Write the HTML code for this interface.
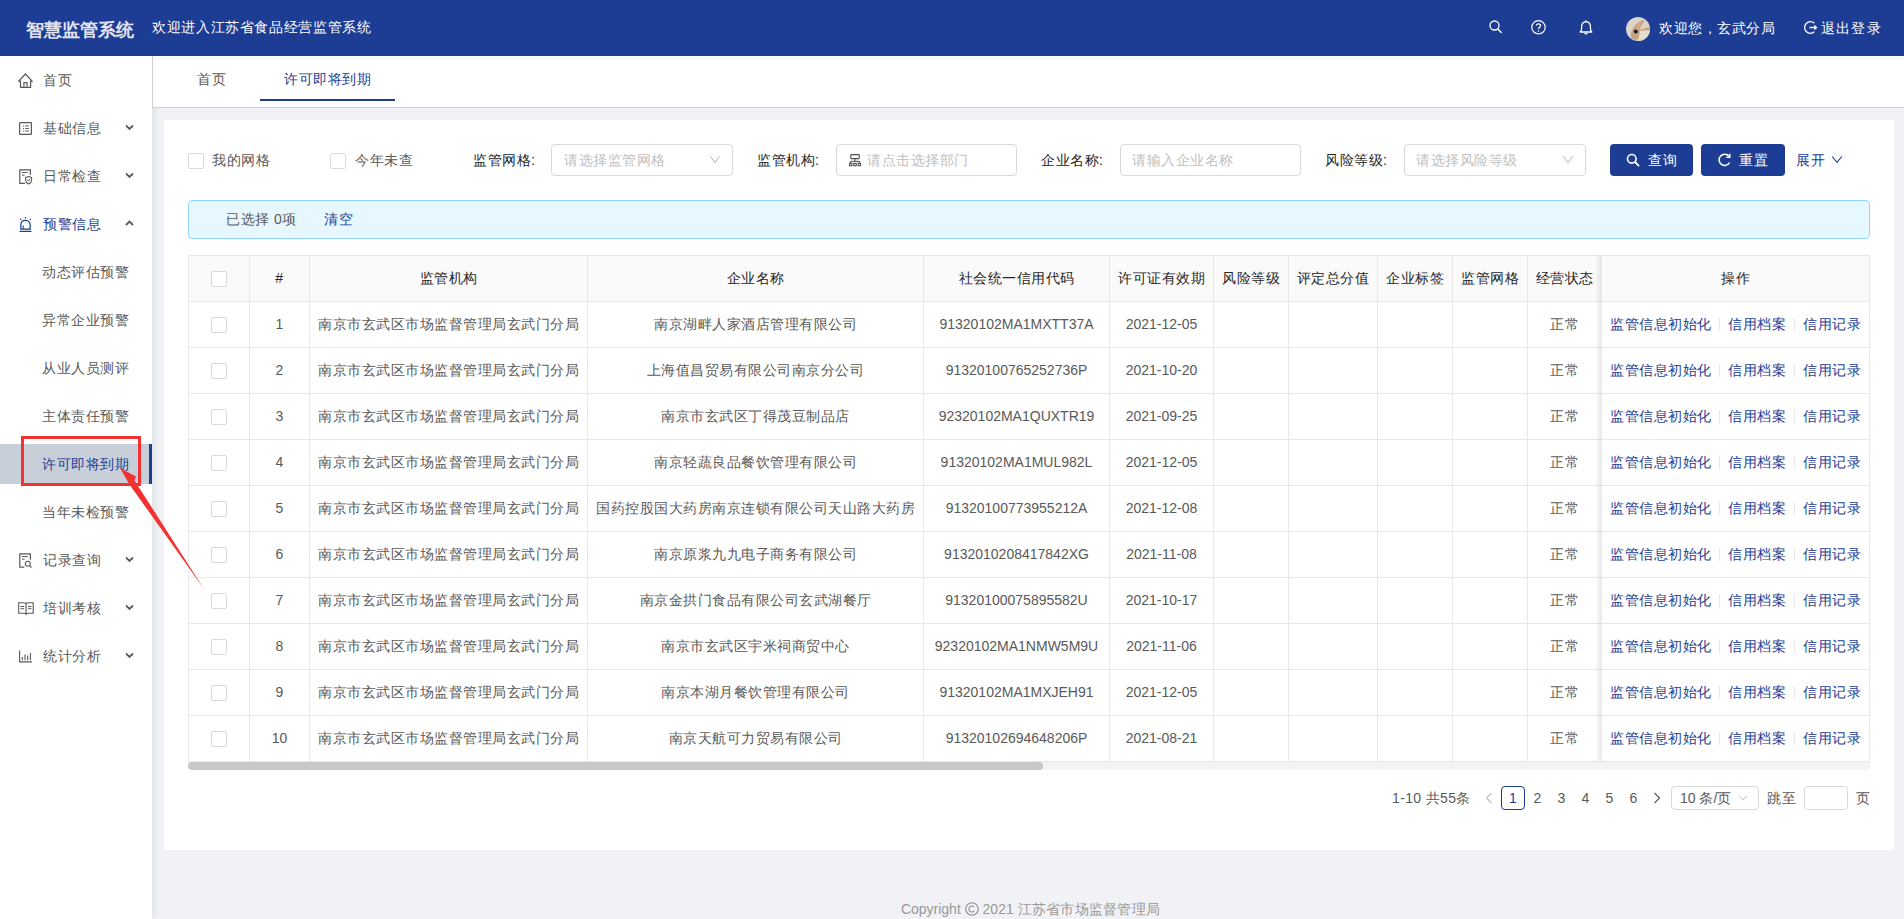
<!DOCTYPE html><html><head><meta charset="utf-8"><style>
*{box-sizing:border-box;margin:0;padding:0}
html,body{width:1904px;height:919px;overflow:hidden;background:#f0f2f5;font-family:"Liberation Sans",sans-serif;font-size:14px;color:#595959;position:relative}
.a{position:absolute;white-space:nowrap;line-height:20px}
.cj{letter-spacing:.5px}
#hdr{position:absolute;left:0;top:0;width:1904px;height:56px;background:#1d3d94}
#side{position:absolute;left:0;top:56px;width:152px;height:863px;background:#fff;box-shadow:2px 0 8px rgba(0,21,41,.08)}
#tabs{position:absolute;left:152px;top:56px;width:1752px;height:52px;background:#fff;border-left:1px solid #cfcfcf;border-bottom:1px solid #cfcfcf;}
#card{position:absolute;left:164px;top:120px;width:1730px;height:730px;background:#fff;border-radius:2px}
.cb{position:absolute;width:16px;height:16px;border:1px solid #d9d9d9;border-radius:2px;background:#fff}
.inp{position:absolute;height:32px;border:1px solid #d9d9d9;border-radius:4px;background:#fff}
.ph{color:#bfbfbf}
.lbl{color:#262626}
.btn{position:absolute;height:32px;top:144px;background:#1d3d94;border-radius:4px;color:#fff}
.hl{position:absolute;background:#e8e8e8}
.th{color:#262626}
.lnk{color:#1d3d94}
</style></head><body><div id="hdr">
<div class="a" style="left:26px;top:20px;font-size:18px;font-weight:bold;color:#e1e4ef">智慧监管系统</div>
<div class="a" style="left:152px;top:17px;color:#fff;letter-spacing:.64px">欢迎进入江苏省食品经营监管系统</div>
<svg style="position:absolute;left:1488px;top:20px" width="16" height="16" viewBox="0 0 16 16"><circle cx="6.5" cy="5.5" r="4.5" fill="none" stroke="#fff" stroke-width="1.3"/><path d="M9.7 8.9 L13.3 12.5" stroke="#fff" stroke-width="1.4" stroke-linecap="round"/></svg>
<svg style="position:absolute;left:1530px;top:20px" width="17" height="15" viewBox="0 0 17 15"><circle cx="8.5" cy="7.3" r="6.7" fill="none" stroke="#fff" stroke-width="1.2"/><path d="M6.4 5.6 C6.4 3.3 10.6 3.3 10.6 5.6 C10.6 7.2 8.5 7.2 8.5 9" fill="none" stroke="#fff" stroke-width="1.2"/><circle cx="8.5" cy="11" r=".8" fill="#fff"/></svg>
<svg style="position:absolute;left:1578px;top:19px" width="16" height="17" viewBox="0 0 16 17"><path d="M2.2 13 C3.3 12 3.6 11 3.6 9.5 V7.3 C3.6 4.6 5.5 2.8 8 2.8 C10.5 2.8 12.4 4.6 12.4 7.3 V9.5 C12.4 11 12.7 12 13.8 13 Z" fill="none" stroke="#fff" stroke-width="1.3" stroke-linejoin="round"/><path d="M8 1.2 V2.8" stroke="#fff" stroke-width="1.3"/><path d="M6.7 14 C7 15.3 9 15.3 9.3 14" stroke="#fff" stroke-width="1.2" fill="none"/></svg>
<svg style="position:absolute;left:1626px;top:17px" width="24" height="24" viewBox="0 0 24 24"><defs><clipPath id="avc"><circle cx="12" cy="12" r="12"/></clipPath></defs><g clip-path="url(#avc)"><rect width="24" height="24" fill="#d9d5cb"/><path d="M5 20 C4 14 8 8 14 4 L19 3 C16 8 14 10 14 13 C18 11 22 10 25 11 L25 14 C20 13 16 15 14 20 C12 24 7 24 5 20 Z" fill="#c49a74" opacity=".85"/><path d="M15 4 C13 8 12 11 12.5 14" stroke="#d8a890" stroke-width="2" fill="none"/><path d="M14 14 C18 13 22 13 25 14 L25 25 L12 25 Z" fill="#e2dfcf"/><circle cx="9.8" cy="14.5" r="2" fill="#1a1a1a"/></g></svg>
<div class="a cj" style="left:1659px;top:18px;color:#fff">欢迎您，玄武分局</div>
<svg style="position:absolute;left:1803px;top:20px" width="15" height="15" viewBox="0 0 15 15"><path d="M11.3 3.2 A5.8 5.8 0 1 0 11.3 11.8" fill="none" stroke="#fff" stroke-width="1.3"/><path d="M6.5 7.5 H13.5 M11.3 5.5 L13.5 7.5 L11.3 9.5" fill="none" stroke="#fff" stroke-width="1.3"/></svg>
<div class="a" style="left:1821px;top:18px;color:#fff;letter-spacing:1.2px">退出登录</div>
</div>
<div id="side">
<div style="position:absolute;left:0;top:388px;width:152px;height:40px;background:#c8cfd8"></div>
<div style="position:absolute;left:149px;top:388px;width:3px;height:40px;background:#1d3d94"></div>
</div>
<div class="a cj" style="left:43px;top:70px;color:#595959">首页</div>
<div class="a cj" style="left:43px;top:118px;color:#595959">基础信息</div>
<svg style="position:absolute;left:125px;top:124px" width="9" height="7" viewBox="0 0 9 7"><path d="M1 1.5 L4.5 5 L8 1.5" fill="none" stroke="#595959" stroke-width="1.8"/></svg>
<div class="a cj" style="left:43px;top:166px;color:#595959">日常检查</div>
<svg style="position:absolute;left:125px;top:172px" width="9" height="7" viewBox="0 0 9 7"><path d="M1 1.5 L4.5 5 L8 1.5" fill="none" stroke="#595959" stroke-width="1.8"/></svg>
<div class="a cj" style="left:43px;top:214px;color:#1d3d94">预警信息</div>
<svg style="position:absolute;left:125px;top:220px" width="9" height="7" viewBox="0 0 9 7"><path d="M1 5 L4.5 1.5 L8 5" fill="none" stroke="#595959" stroke-width="1.8"/></svg>
<div class="a cj" style="left:42px;top:262px;color:#595959">动态评估预警</div>
<div class="a cj" style="left:42px;top:310px;color:#595959">异常企业预警</div>
<div class="a cj" style="left:42px;top:358px;color:#595959">从业人员测评</div>
<div class="a cj" style="left:42px;top:406px;color:#595959">主体责任预警</div>
<div class="a cj" style="left:42px;top:454px;color:#1d3d94">许可即将到期</div>
<div class="a cj" style="left:42px;top:502px;color:#595959">当年未检预警</div>
<div class="a cj" style="left:43px;top:550px;color:#595959">记录查询</div>
<svg style="position:absolute;left:125px;top:556px" width="9" height="7" viewBox="0 0 9 7"><path d="M1 1.5 L4.5 5 L8 1.5" fill="none" stroke="#595959" stroke-width="1.8"/></svg>
<div class="a cj" style="left:43px;top:598px;color:#595959">培训考核</div>
<svg style="position:absolute;left:125px;top:604px" width="9" height="7" viewBox="0 0 9 7"><path d="M1 1.5 L4.5 5 L8 1.5" fill="none" stroke="#595959" stroke-width="1.8"/></svg>
<div class="a cj" style="left:43px;top:646px;color:#595959">统计分析</div>
<svg style="position:absolute;left:125px;top:652px" width="9" height="7" viewBox="0 0 9 7"><path d="M1 1.5 L4.5 5 L8 1.5" fill="none" stroke="#595959" stroke-width="1.8"/></svg>
<svg style="position:absolute;left:18px;top:73px" width="15" height="15" viewBox="0 0 15 15"><path d="M.7 8.2 L7.4 1 L14.1 8.2 H12.6 V14.4 H2.5 V8.2 Z" fill="none" stroke="#595959" stroke-width="1.2" stroke-linejoin="miter"/><path d="M5.9 14.4 V9.6 H9 V14.4" fill="none" stroke="#595959" stroke-width="1.1"/></svg>
<svg style="position:absolute;left:19px;top:122px" width="13" height="13" viewBox="0 0 13 13"><rect x=".6" y=".6" width="11.8" height="11.8" rx=".6" fill="none" stroke="#595959" stroke-width="1.2"/><path d="M4 4h1M6.2 4h3.6M4 6.5h1M6.2 6.5h3.6M4 9h1M6.2 9h3.6" stroke="#595959" stroke-width="1"/></svg>
<svg style="position:absolute;left:19px;top:169px" width="14" height="16" viewBox="0 0 14 16"><path d="M6 14.4 H.8 V.8 H11.4 V6" fill="none" stroke="#595959" stroke-width="1.2"/><path d="M3 3.6h5.8M3 6.2h2.6" stroke="#595959" stroke-width="1"/><path d="M9.6 7.4 L12.6 8.6 V11.2 C12.6 12.9 11.3 14.1 9.6 15 C7.9 14.1 6.6 12.9 6.6 11.2 V8.6 Z" fill="none" stroke="#595959" stroke-width="1.1" stroke-linejoin="round"/><path d="M8.2 11 L9.3 12 L11 10" fill="none" stroke="#595959" stroke-width="1"/></svg>
<svg style="position:absolute;left:19px;top:216px" width="14" height="16" viewBox="0 0 14 16"><path d="M6.5 .9V2.6M1.2 2.8L2.3 3.9M11.8 2.8L10.7 3.9" stroke="#1d3d94" stroke-width="1.2"/><path d="M1.8 13.2 V9.3 C1.8 6.3 3.8 4.3 6.5 4.3 C9.2 4.3 11.2 6.3 11.2 9.3 V13.2 Z" fill="none" stroke="#1d3d94" stroke-width="1.2"/><path d="M4.2 12.8 V9.6" stroke="#1d3d94" stroke-width="1.1"/><path d="M.6 15.4 H12.4" stroke="#1d3d94" stroke-width="1.3"/></svg>
<svg style="position:absolute;left:19px;top:553px" width="14" height="16" viewBox="0 0 14 16"><path d="M5.3 14.2 H.8 V.8 H11.4 V6.8" fill="none" stroke="#595959" stroke-width="1.2"/><path d="M3 3.6h5.8M3 6.2h2.6" stroke="#595959" stroke-width="1"/><circle cx="8.8" cy="10.8" r="2.5" fill="none" stroke="#595959" stroke-width="1.1"/><path d="M10.6 12.6 L12.6 14.6" stroke="#595959" stroke-width="1.2"/></svg>
<svg style="position:absolute;left:18px;top:602px" width="16" height="13" viewBox="0 0 16 13"><path d="M.7 .8 H5.8 C6.9 .8 8 1.4 8 2.4 C8 1.4 9.1 .8 10.2 .8 H15.2 V11.3 H10 C9 11.3 8.2 11.7 8 12.2 C7.8 11.7 7 11.3 6 11.3 H.7 Z M8 2.4 V12" fill="none" stroke="#595959" stroke-width="1.1"/><path d="M2.5 4.5h3.5M2.5 6.7h3.5M10 4.5h3.5M10 6.7h3.5" stroke="#595959" stroke-width="1"/></svg>
<svg style="position:absolute;left:19px;top:650px" width="14" height="13" viewBox="0 0 14 13"><path d="M.6 .5 V11.9 H13" fill="none" stroke="#595959" stroke-width="1.1"/><path d="M3.3 7v3.2M6 4.5v5.7M8.7 5.5v4.7M11.4 3v7.2" stroke="#595959" stroke-width="1.1"/></svg>
<div id="tabs"></div>
<div style="position:absolute;left:153px;top:57px;width:1751px;height:4px;background:linear-gradient(rgba(0,0,0,.045),rgba(0,0,0,0))"></div>
<div class="a cj" style="left:197px;top:69px;color:#595959">首页</div>
<div class="a cj" style="left:284px;top:69px;color:#1d3d94">许可即将到期</div>
<div style="position:absolute;left:260px;top:99px;width:135px;height:2px;background:#1d3d94"></div>
<div id="card"></div>
<div class="cb" style="left:188px;top:153px"></div>
<div class="a cj" style="left:212px;top:150px;">我的网格</div>
<div class="cb" style="left:330px;top:153px"></div>
<div class="a cj" style="left:355px;top:150px;">今年未查</div>
<div class="a cj lbl" style="left:473px;top:150px;">监管网格:</div>
<div class="inp" style="left:551px;top:144px;width:182px"></div>
<div class="a cj ph" style="left:564px;top:150px;">请选择监管网格</div>
<svg style="position:absolute;left:709px;top:155px" width="12" height="9" viewBox="0 0 12 9"><path d="M1.4 1.3 L6 7.6 L10.6 1.3" fill="none" stroke="#b3b3b3" stroke-width="1"/></svg>
<div class="a cj lbl" style="left:757px;top:150px;">监管机构:</div>
<div class="inp" style="left:836px;top:144px;width:181px"></div>
<svg style="position:absolute;left:848px;top:154px" width="14" height="13" viewBox="0 0 14 13"><rect x="2.8" y=".6" width="8.4" height="4" rx=".6" fill="none" stroke="#4d4d4d" stroke-width="1.1"/><path d="M7 4.6V7.3M2.6 9V7.3H11.4V9" fill="none" stroke="#4d4d4d" stroke-width="1"/><rect x="1.5" y="9.3" width="2.4" height="2.4" fill="none" stroke="#4d4d4d" stroke-width="1.1"/><rect x="5.8" y="9.3" width="2.4" height="2.4" fill="none" stroke="#4d4d4d" stroke-width="1.1"/><rect x="10.1" y="9.3" width="2.4" height="2.4" fill="none" stroke="#4d4d4d" stroke-width="1.1"/></svg>
<div class="a cj ph" style="left:867px;top:150px;">请点击选择部门</div>
<div class="a cj lbl" style="left:1041px;top:150px;">企业名称:</div>
<div class="inp" style="left:1120px;top:144px;width:181px"></div>
<div class="a cj ph" style="left:1132px;top:150px;">请输入企业名称</div>
<div class="a cj lbl" style="left:1325px;top:150px;">风险等级:</div>
<div class="inp" style="left:1404px;top:144px;width:182px"></div>
<div class="a cj ph" style="left:1416px;top:150px;">请选择风险等级</div>
<svg style="position:absolute;left:1562px;top:155px" width="12" height="9" viewBox="0 0 12 9"><path d="M1.4 1.3 L6 7.6 L10.6 1.3" fill="none" stroke="#b3b3b3" stroke-width="1"/></svg>
<div class="btn" style="left:1610px;width:83px"></div>
<svg style="position:absolute;left:1626px;top:153px" width="14" height="14" viewBox="0 0 14 14"><circle cx="5.8" cy="5.8" r="4.3" fill="none" stroke="#fff" stroke-width="1.6"/><path d="M9 9 L12.6 12.6" stroke="#fff" stroke-width="1.8" stroke-linecap="round"/></svg>
<div class="a cj" style="left:1648px;top:150px;color:#fff">查询</div>
<div class="btn" style="left:1701px;width:84px"></div>
<svg style="position:absolute;left:1717px;top:153px" width="15" height="14" viewBox="0 0 15 14"><path d="M12 3.2 A5.6 5.6 0 1 0 12.6 9.5" fill="none" stroke="#fff" stroke-width="1.5"/><path d="M12.8 .8 V4.2 H9.4" fill="none" stroke="#fff" stroke-width="1.4"/></svg>
<div class="a cj" style="left:1739px;top:150px;color:#fff">重置</div>
<div class="a cj" style="left:1796px;top:150px;color:#1d3d94">展开</div>
<svg style="position:absolute;left:1831px;top:155px" width="12" height="9" viewBox="0 0 12 9"><path d="M1.2 1.5 L6 7.3 L10.8 1.5" fill="none" stroke="#1d3d94" stroke-width="1.1"/></svg>
<div style="position:absolute;left:188px;top:200px;width:1682px;height:39px;background:#e6f7ff;border:1px solid #91d5ff;border-radius:4px"></div>
<div class="a cj" style="left:226px;top:209px;">已选择 0项</div>
<div class="a cj" style="left:324px;top:209px;color:#1d3d94">清空</div>
<div style="position:absolute;left:188px;top:255px;width:1682px;height:46px;background:#fafafa"></div>
<div class="hl" style="left:188px;top:255px;width:1682px;height:1px"></div>
<div class="hl" style="left:188px;top:301px;width:1682px;height:1px"></div>
<div class="hl" style="left:188px;top:347px;width:1682px;height:1px"></div>
<div class="hl" style="left:188px;top:393px;width:1682px;height:1px"></div>
<div class="hl" style="left:188px;top:439px;width:1682px;height:1px"></div>
<div class="hl" style="left:188px;top:485px;width:1682px;height:1px"></div>
<div class="hl" style="left:188px;top:531px;width:1682px;height:1px"></div>
<div class="hl" style="left:188px;top:577px;width:1682px;height:1px"></div>
<div class="hl" style="left:188px;top:623px;width:1682px;height:1px"></div>
<div class="hl" style="left:188px;top:669px;width:1682px;height:1px"></div>
<div class="hl" style="left:188px;top:715px;width:1682px;height:1px"></div>
<div class="hl" style="left:188px;top:761px;width:1682px;height:1px"></div>
<div class="hl" style="left:188px;top:255px;width:1px;height:507px"></div>
<div class="hl" style="left:249px;top:255px;width:1px;height:507px"></div>
<div class="hl" style="left:309px;top:255px;width:1px;height:507px"></div>
<div class="hl" style="left:587px;top:255px;width:1px;height:507px"></div>
<div class="hl" style="left:923px;top:255px;width:1px;height:507px"></div>
<div class="hl" style="left:1109px;top:255px;width:1px;height:507px"></div>
<div class="hl" style="left:1213px;top:255px;width:1px;height:507px"></div>
<div class="hl" style="left:1288px;top:255px;width:1px;height:507px"></div>
<div class="hl" style="left:1377px;top:255px;width:1px;height:507px"></div>
<div class="hl" style="left:1452px;top:255px;width:1px;height:507px"></div>
<div class="hl" style="left:1527px;top:255px;width:1px;height:507px"></div>
<div class="hl" style="left:1601px;top:255px;width:1px;height:507px"></div>
<div class="hl" style="left:1869px;top:255px;width:1px;height:507px"></div>
<div style="position:absolute;left:1595px;top:255px;width:6px;height:506px;background:linear-gradient(to right,rgba(0,0,0,0),rgba(0,0,0,.08))"></div>
<div class="hl" style="left:1601px;top:255px;width:1px;height:507px"></div>
<div class="cb" style="left:211px;top:271px"></div>
<div class="a cj th" style="left:250px;width:59px;top:268px;text-align:center;">#</div>
<div class="a cj th" style="left:310px;width:277px;top:268px;text-align:center;">监管机构</div>
<div class="a cj th" style="left:588px;width:335px;top:268px;text-align:center;">企业名称</div>
<div class="a cj th" style="left:924px;width:185px;top:268px;text-align:center;">社会统一信用代码</div>
<div class="a cj th" style="left:1110px;width:103px;top:268px;text-align:center;">许可证有效期</div>
<div class="a cj th" style="left:1214px;width:74px;top:268px;text-align:center;">风险等级</div>
<div class="a cj th" style="left:1289px;width:88px;top:268px;text-align:center;">评定总分值</div>
<div class="a cj th" style="left:1378px;width:74px;top:268px;text-align:center;">企业标签</div>
<div class="a cj th" style="left:1453px;width:74px;top:268px;text-align:center;">监管网格</div>
<div class="a cj th" style="left:1528px;width:73px;top:268px;text-align:center;">经营状态</div>
<div class="a cj th" style="left:1602px;width:267px;top:268px;text-align:center;">操作</div>
<div class="cb" style="left:211px;top:317px"></div>
<div class="a " style="left:250px;width:59px;top:314px;text-align:center;">1</div>
<div class="a cj" style="left:318px;top:314px;">南京市玄武区市场监督管理局玄武门分局</div>
<div class="a cj" style="left:588px;width:335px;top:314px;text-align:center;">南京湖畔人家酒店管理有限公司</div>
<div class="a " style="left:924px;width:185px;top:314px;text-align:center;">91320102MA1MXTT37A</div>
<div class="a " style="left:1110px;width:103px;top:314px;text-align:center;">2021-12-05</div>
<div class="a cj" style="left:1528px;width:73px;top:314px;text-align:center;">正常</div>
<div class="a cj lnk" style="left:1610px;top:314px;">监管信息初始化</div>
<div style="position:absolute;left:1719px;top:318px;width:1px;height:13px;background:#e8e8e8"></div>
<div class="a cj lnk" style="left:1728px;top:314px;">信用档案</div>
<div style="position:absolute;left:1794px;top:318px;width:1px;height:13px;background:#e8e8e8"></div>
<div class="a cj lnk" style="left:1803px;top:314px;">信用记录</div>
<div class="cb" style="left:211px;top:363px"></div>
<div class="a " style="left:250px;width:59px;top:360px;text-align:center;">2</div>
<div class="a cj" style="left:318px;top:360px;">南京市玄武区市场监督管理局玄武门分局</div>
<div class="a cj" style="left:588px;width:335px;top:360px;text-align:center;">上海值昌贸易有限公司南京分公司</div>
<div class="a " style="left:924px;width:185px;top:360px;text-align:center;">91320100765252736P</div>
<div class="a " style="left:1110px;width:103px;top:360px;text-align:center;">2021-10-20</div>
<div class="a cj" style="left:1528px;width:73px;top:360px;text-align:center;">正常</div>
<div class="a cj lnk" style="left:1610px;top:360px;">监管信息初始化</div>
<div style="position:absolute;left:1719px;top:364px;width:1px;height:13px;background:#e8e8e8"></div>
<div class="a cj lnk" style="left:1728px;top:360px;">信用档案</div>
<div style="position:absolute;left:1794px;top:364px;width:1px;height:13px;background:#e8e8e8"></div>
<div class="a cj lnk" style="left:1803px;top:360px;">信用记录</div>
<div class="cb" style="left:211px;top:409px"></div>
<div class="a " style="left:250px;width:59px;top:406px;text-align:center;">3</div>
<div class="a cj" style="left:318px;top:406px;">南京市玄武区市场监督管理局玄武门分局</div>
<div class="a cj" style="left:588px;width:335px;top:406px;text-align:center;">南京市玄武区丁得茂豆制品店</div>
<div class="a " style="left:924px;width:185px;top:406px;text-align:center;">92320102MA1QUXTR19</div>
<div class="a " style="left:1110px;width:103px;top:406px;text-align:center;">2021-09-25</div>
<div class="a cj" style="left:1528px;width:73px;top:406px;text-align:center;">正常</div>
<div class="a cj lnk" style="left:1610px;top:406px;">监管信息初始化</div>
<div style="position:absolute;left:1719px;top:410px;width:1px;height:13px;background:#e8e8e8"></div>
<div class="a cj lnk" style="left:1728px;top:406px;">信用档案</div>
<div style="position:absolute;left:1794px;top:410px;width:1px;height:13px;background:#e8e8e8"></div>
<div class="a cj lnk" style="left:1803px;top:406px;">信用记录</div>
<div class="cb" style="left:211px;top:455px"></div>
<div class="a " style="left:250px;width:59px;top:452px;text-align:center;">4</div>
<div class="a cj" style="left:318px;top:452px;">南京市玄武区市场监督管理局玄武门分局</div>
<div class="a cj" style="left:588px;width:335px;top:452px;text-align:center;">南京轻蔬良品餐饮管理有限公司</div>
<div class="a " style="left:924px;width:185px;top:452px;text-align:center;">91320102MA1MUL982L</div>
<div class="a " style="left:1110px;width:103px;top:452px;text-align:center;">2021-12-05</div>
<div class="a cj" style="left:1528px;width:73px;top:452px;text-align:center;">正常</div>
<div class="a cj lnk" style="left:1610px;top:452px;">监管信息初始化</div>
<div style="position:absolute;left:1719px;top:456px;width:1px;height:13px;background:#e8e8e8"></div>
<div class="a cj lnk" style="left:1728px;top:452px;">信用档案</div>
<div style="position:absolute;left:1794px;top:456px;width:1px;height:13px;background:#e8e8e8"></div>
<div class="a cj lnk" style="left:1803px;top:452px;">信用记录</div>
<div class="cb" style="left:211px;top:501px"></div>
<div class="a " style="left:250px;width:59px;top:498px;text-align:center;">5</div>
<div class="a cj" style="left:318px;top:498px;">南京市玄武区市场监督管理局玄武门分局</div>
<div class="a cj" style="left:588px;width:335px;top:498px;text-align:center;">国药控股国大药房南京连锁有限公司天山路大药房</div>
<div class="a " style="left:924px;width:185px;top:498px;text-align:center;">91320100773955212A</div>
<div class="a " style="left:1110px;width:103px;top:498px;text-align:center;">2021-12-08</div>
<div class="a cj" style="left:1528px;width:73px;top:498px;text-align:center;">正常</div>
<div class="a cj lnk" style="left:1610px;top:498px;">监管信息初始化</div>
<div style="position:absolute;left:1719px;top:502px;width:1px;height:13px;background:#e8e8e8"></div>
<div class="a cj lnk" style="left:1728px;top:498px;">信用档案</div>
<div style="position:absolute;left:1794px;top:502px;width:1px;height:13px;background:#e8e8e8"></div>
<div class="a cj lnk" style="left:1803px;top:498px;">信用记录</div>
<div class="cb" style="left:211px;top:547px"></div>
<div class="a " style="left:250px;width:59px;top:544px;text-align:center;">6</div>
<div class="a cj" style="left:318px;top:544px;">南京市玄武区市场监督管理局玄武门分局</div>
<div class="a cj" style="left:588px;width:335px;top:544px;text-align:center;">南京原浆九九电子商务有限公司</div>
<div class="a " style="left:924px;width:185px;top:544px;text-align:center;">9132010208417842XG</div>
<div class="a " style="left:1110px;width:103px;top:544px;text-align:center;">2021-11-08</div>
<div class="a cj" style="left:1528px;width:73px;top:544px;text-align:center;">正常</div>
<div class="a cj lnk" style="left:1610px;top:544px;">监管信息初始化</div>
<div style="position:absolute;left:1719px;top:548px;width:1px;height:13px;background:#e8e8e8"></div>
<div class="a cj lnk" style="left:1728px;top:544px;">信用档案</div>
<div style="position:absolute;left:1794px;top:548px;width:1px;height:13px;background:#e8e8e8"></div>
<div class="a cj lnk" style="left:1803px;top:544px;">信用记录</div>
<div class="cb" style="left:211px;top:593px"></div>
<div class="a " style="left:250px;width:59px;top:590px;text-align:center;">7</div>
<div class="a cj" style="left:318px;top:590px;">南京市玄武区市场监督管理局玄武门分局</div>
<div class="a cj" style="left:588px;width:335px;top:590px;text-align:center;">南京金拱门食品有限公司玄武湖餐厅</div>
<div class="a " style="left:924px;width:185px;top:590px;text-align:center;">91320100075895582U</div>
<div class="a " style="left:1110px;width:103px;top:590px;text-align:center;">2021-10-17</div>
<div class="a cj" style="left:1528px;width:73px;top:590px;text-align:center;">正常</div>
<div class="a cj lnk" style="left:1610px;top:590px;">监管信息初始化</div>
<div style="position:absolute;left:1719px;top:594px;width:1px;height:13px;background:#e8e8e8"></div>
<div class="a cj lnk" style="left:1728px;top:590px;">信用档案</div>
<div style="position:absolute;left:1794px;top:594px;width:1px;height:13px;background:#e8e8e8"></div>
<div class="a cj lnk" style="left:1803px;top:590px;">信用记录</div>
<div class="cb" style="left:211px;top:639px"></div>
<div class="a " style="left:250px;width:59px;top:636px;text-align:center;">8</div>
<div class="a cj" style="left:318px;top:636px;">南京市玄武区市场监督管理局玄武门分局</div>
<div class="a cj" style="left:588px;width:335px;top:636px;text-align:center;">南京市玄武区宇米祠商贸中心</div>
<div class="a " style="left:924px;width:185px;top:636px;text-align:center;">92320102MA1NMW5M9U</div>
<div class="a " style="left:1110px;width:103px;top:636px;text-align:center;">2021-11-06</div>
<div class="a cj" style="left:1528px;width:73px;top:636px;text-align:center;">正常</div>
<div class="a cj lnk" style="left:1610px;top:636px;">监管信息初始化</div>
<div style="position:absolute;left:1719px;top:640px;width:1px;height:13px;background:#e8e8e8"></div>
<div class="a cj lnk" style="left:1728px;top:636px;">信用档案</div>
<div style="position:absolute;left:1794px;top:640px;width:1px;height:13px;background:#e8e8e8"></div>
<div class="a cj lnk" style="left:1803px;top:636px;">信用记录</div>
<div class="cb" style="left:211px;top:685px"></div>
<div class="a " style="left:250px;width:59px;top:682px;text-align:center;">9</div>
<div class="a cj" style="left:318px;top:682px;">南京市玄武区市场监督管理局玄武门分局</div>
<div class="a cj" style="left:588px;width:335px;top:682px;text-align:center;">南京本湖月餐饮管理有限公司</div>
<div class="a " style="left:924px;width:185px;top:682px;text-align:center;">91320102MA1MXJEH91</div>
<div class="a " style="left:1110px;width:103px;top:682px;text-align:center;">2021-12-05</div>
<div class="a cj" style="left:1528px;width:73px;top:682px;text-align:center;">正常</div>
<div class="a cj lnk" style="left:1610px;top:682px;">监管信息初始化</div>
<div style="position:absolute;left:1719px;top:686px;width:1px;height:13px;background:#e8e8e8"></div>
<div class="a cj lnk" style="left:1728px;top:682px;">信用档案</div>
<div style="position:absolute;left:1794px;top:686px;width:1px;height:13px;background:#e8e8e8"></div>
<div class="a cj lnk" style="left:1803px;top:682px;">信用记录</div>
<div class="cb" style="left:211px;top:731px"></div>
<div class="a " style="left:250px;width:59px;top:728px;text-align:center;">10</div>
<div class="a cj" style="left:318px;top:728px;">南京市玄武区市场监督管理局玄武门分局</div>
<div class="a cj" style="left:588px;width:335px;top:728px;text-align:center;">南京天航可力贸易有限公司</div>
<div class="a " style="left:924px;width:185px;top:728px;text-align:center;">91320102694648206P</div>
<div class="a " style="left:1110px;width:103px;top:728px;text-align:center;">2021-08-21</div>
<div class="a cj" style="left:1528px;width:73px;top:728px;text-align:center;">正常</div>
<div class="a cj lnk" style="left:1610px;top:728px;">监管信息初始化</div>
<div style="position:absolute;left:1719px;top:732px;width:1px;height:13px;background:#e8e8e8"></div>
<div class="a cj lnk" style="left:1728px;top:728px;">信用档案</div>
<div style="position:absolute;left:1794px;top:732px;width:1px;height:13px;background:#e8e8e8"></div>
<div class="a cj lnk" style="left:1803px;top:728px;">信用记录</div>
<div style="position:absolute;left:188px;top:762px;width:1682px;height:8px;background:#f3f3f3;border-radius:0 0 4px 4px"></div>
<div style="position:absolute;left:188px;top:762px;width:855px;height:8px;background:#c8c8c8;border-radius:4px"></div>
<div class="a " style="left:1392px;top:788px;letter-spacing:.35px">1-10 共55条</div>
<svg style="position:absolute;left:1485px;top:792px" width="8" height="12" viewBox="0 0 8 12"><path d="M6.5 1 L1.5 6 L6.5 11" fill="none" stroke="#bfbfbf" stroke-width="1.1"/></svg>
<div style="position:absolute;left:1501px;top:786px;width:24px;height:24px;border:1px solid #1d3d94;border-radius:4px;background:#fff"></div>
<div class="a " style="left:1501px;width:24px;top:788px;text-align:center;color:#1d3d94">1</div>
<div class="a " style="left:1526px;width:23px;top:788px;text-align:center;">2</div>
<div class="a " style="left:1550px;width:23px;top:788px;text-align:center;">3</div>
<div class="a " style="left:1574px;width:23px;top:788px;text-align:center;">4</div>
<div class="a " style="left:1598px;width:23px;top:788px;text-align:center;">5</div>
<div class="a " style="left:1622px;width:23px;top:788px;text-align:center;">6</div>
<svg style="position:absolute;left:1653px;top:792px" width="8" height="12" viewBox="0 0 8 12"><path d="M1.5 1 L6.5 6 L1.5 11" fill="none" stroke="#595959" stroke-width="1.1"/></svg>
<div class="inp" style="left:1671px;top:786px;width:88px;height:24px;border-radius:4px"></div>
<div class="a " style="left:1680px;top:788px;">10 条/页</div>
<svg style="position:absolute;left:1738px;top:794px" width="10" height="8" viewBox="0 0 10 8"><path d="M1 1.5 L5 6 L9 1.5" fill="none" stroke="#bfbfbf" stroke-width="1"/></svg>
<div class="a cj" style="left:1767px;top:788px;">跳至</div>
<div class="inp" style="left:1804px;top:786px;width:44px;height:24px;border-radius:4px"></div>
<div class="a cj" style="left:1856px;top:788px;">页</div>
<div class="a" style="left:155px;width:1751px;top:899px;text-align:center;color:#999">Copyright <svg width="14" height="14" viewBox="0 0 14 14" style="vertical-align:-2px"><circle cx="7" cy="7" r="6.3" fill="none" stroke="#8c8c8c" stroke-width="1.1"/><path d="M9.2 5.1 A3 3 0 1 0 9.2 8.9" fill="none" stroke="#8c8c8c" stroke-width="1.1"/></svg> 2021 <span style="letter-spacing:.25px">江苏省市场监督管理局</span></div>
<div style="position:absolute;left:21px;top:436px;width:120px;height:50px;border:3px solid #f43131"></div>
<svg style="position:absolute;left:0;top:0" width="260" height="620" viewBox="0 0 260 620"><polygon points="120,468 136,476.5 134.5,480.5 204,589 129.5,484.5" fill="#f43131"/></svg></body></html>
